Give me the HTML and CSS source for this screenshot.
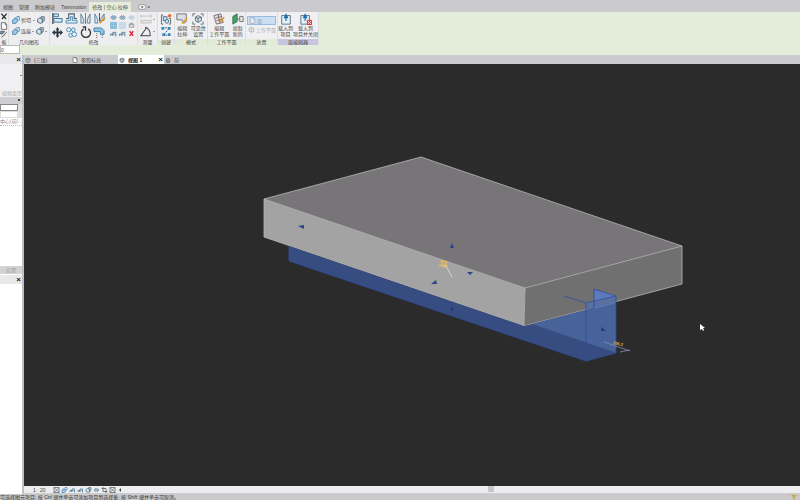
FILE: index.html
```html
<!DOCTYPE html>
<html>
<head>
<meta charset="utf-8">
<title>空心 拉伸</title>
<link rel="stylesheet" href="styles.css">
</head>
<body>
<svg class="defs" aria-hidden="true">
  <symbol id="cube" viewBox="0 0 12 12"><path d="M2 4l4-2 4 2v5l-4 2-4-2zM2 4l4 2 4-2M6 6v5" fill="#e8eef2" stroke="#46535e" stroke-width="1.3"/></symbol>
  <symbol id="solid" viewBox="0 0 12 12"><path d="M1 5l3-2 4 1v6l-3 1-4-2z" fill="#d9e7f1" stroke="#41586b" stroke-width="1.3"/><path d="M6 1h5v6L8 9V4H6z" fill="#a4c3da" stroke="#41586b"/></symbol>
  <symbol id="join" viewBox="0 0 12 12"><path d="M5 3l2-2h4v5L9 8" fill="#e6f0f5" stroke="#3576a8" stroke-width="1.2"/><path d="M1 6l2-2h5v4l-2 3H1z" fill="#9ccbeb" stroke="#3576a8" stroke-width="1.2"/></symbol>
  <symbol id="page" viewBox="0 0 12 12"><path d="M2 1h6l2 3v7H2zM8 1v3h2" fill="#fafafa" stroke="#666" stroke-width="1.3"/></symbol>
  <symbol id="mini" viewBox="0 0 12 12"><path d="M1 6l3-3h1v6H4zM11 6L8 3H7v6h1z" fill="#b9d4e6" stroke="#50768f" stroke-width="1.2"/></symbol>
  <symbol id="grid" viewBox="0 0 12 12"><path d="M1 1h10v10H1z" fill="#b7dff5" stroke="#4492bb"/><path d="M3 3h2v2H3zM7 3h2v2H7zM3 7h2v2H3zM7 7h2v2H7z" fill="#fff" stroke="#4492bb"/></symbol>
  <symbol id="stairs" viewBox="0 0 12 12"><path d="M1 10V7h4V4h5v7M4 10V8h3V6" fill="none" stroke="#4d7897" stroke-width="1.6"/></symbol>
  <symbol id="crop" viewBox="0 0 12 12"><path d="M3 0v9h9M0 3h9v9" fill="none" stroke="#4d5560" stroke-width="1.5"/></symbol>
  <symbol id="detail" viewBox="0 0 12 12"><path d="M1 1h10v10H1zM1 1l10 10M11 1L1 11" fill="#f7f7f7" stroke="#4d5560" stroke-width="1.4"/></symbol>
</svg>
<div class="app">
  <nav class="menu">
    <button>视图</button><button>管理</button><button>附加模块</button><button>Twinmotion</button><button class="current">修改 | 空心 拉伸</button>
    <button class="menu-toggle" aria-label="功能区显示"><svg viewBox="0 0 20 10"><rect x="1" y="1" width="12" height="8" rx="3" fill="#eee" stroke="#777"/><path d="M5 4h4L7 7zM16 4h4l-2 3z" fill="#444"/></svg></button>
  </nav>
  <header class="ribbon">
    <section class="panel clip">
      <div class="body stack">
        <button aria-label="剪切"><svg viewBox="0 0 12 12"><path d="M2 1l7 8M10 1L3 9" stroke="#333" stroke-width="2"/></svg></button>
        <button aria-label="复制"><svg><use href="#page"/></svg></button>
        <button aria-label="匹配"><svg viewBox="0 0 12 12"><path d="M1 2h6l-3 4H1zM10 3L5 9l-3 2" fill="#6c9ab7" stroke="#444"/></svg></button>
      </div><h2>板</h2>
    </section>
    <section class="panel geometry">
      <div class="body rows">
        <div><button><svg><use href="#join"/></svg>剪切</button><i></i><button aria-label="切割"><svg><use href="#solid"/></svg></button></div>
        <div><button><svg><use href="#join"/></svg>连接</button><i></i><button aria-label="拆分面"><svg><use href="#solid"/></svg></button><i></i></div>
      </div><h2>几何图形</h2>
    </section>
    <section class="panel modify">
      <div class="body tools">
        <div class="large-grid">
          <button aria-label="对齐"><svg viewBox="0 0 12 12"><path d="M1 0v12" stroke="#222" stroke-width="1.2"/><path d="M2 1h5v3H2zM2 6h9v4H2z" fill="#d3ebf8" stroke="#386f96"/></svg></button>
          <button aria-label="偏移"><svg viewBox="0 0 12 12"><path d="M0 6h3V1h6v5h3" fill="none" stroke="#415e71" stroke-width="1.2"/><path d="M0 8h5V4h2v4h5v3H0z" fill="#d3ebf8" stroke="#5289ac"/></svg></button>
          <button aria-label="镜像轴"><svg viewBox="0 0 12 12"><path d="M1 11V1l3 6v4zM11 11V1L8 7v4z" fill="#d5e8ef" stroke="#607f8d"/><path d="M6 0v12" stroke="#478e4c"/></svg></button>
          <button aria-label="镜像绘制"><svg viewBox="0 0 12 12"><path d="M1 11V1l3 6v4zM11 8V1L7 7v2z" fill="#d5e8ef" stroke="#4f7f9e"/><path d="M6 0v9" stroke="#444"/><path d="M12 5l-6 6" stroke="#e1922e" stroke-width="2"/></svg></button>
          <button aria-label="移动"><svg viewBox="0 0 12 12"><path d="M6 0l2 3H7v2h2V3l3 3-3 3V7H7v2h1l-2 3-2-3h1V7H3v2L0 6l3-3v2h2V3H4z" fill="#293844"/></svg></button>
          <button aria-label="复制"><svg viewBox="0 0 12 12"><g fill="#e5f4fa" stroke="#4787ad"><circle cx="3" cy="3" r="2.3"/><circle cx="8" cy="3" r="2"/><circle cx="5" cy="9" r="2"/><circle cx="9" cy="8" r="2.5"/></g></svg></button>
          <button aria-label="旋转"><svg viewBox="0 0 12 12"><path d="M4 2a5 5 0 1 0 5 0M3 0h3v4" fill="none" stroke="#333" stroke-width="1.4"/></svg></button>
          <button aria-label="修剪"><svg viewBox="0 0 12 12"><path d="M0 1h8l3 3v4H7V5H0z" fill="#8fc3e0" stroke="#3f7fa6"/><path d="M3 7v5M9 9v3" stroke="#555" stroke-dasharray="1"/></svg></button>
        </div>
        <div class="small-grid">
          <button aria-label="拆分"><svg><use href="#mini"/></svg></button><button aria-label="间隙拆分"><svg><use href="#mini"/></svg></button><button class="muted" aria-label="解锁"><svg><use href="#mini"/></svg></button>
          <button aria-label="阵列"><svg><use href="#grid"/></svg></button><button class="muted" aria-label="缩放"><svg><use href="#grid"/></svg></button><button aria-label="锁定"><svg viewBox="0 0 12 12"><path d="M2 4h8v5H2zM4 4V2h4v2" fill="#ddd" stroke="#777"/></svg></button>
          <button aria-label="单个修剪"><svg><use href="#stairs"/></svg></button><button aria-label="多个修剪"><svg><use href="#stairs"/></svg></button><button aria-label="删除"><svg viewBox="0 0 12 12"><path d="M3 2l6 8M9 2L3 10" stroke="#dc2733" stroke-width="2.5"/></svg></button>
        </div>
      </div><h2>修改</h2>
    </section>
    <section class="panel measure">
      <div class="body rows">
        <div><button class="muted" aria-label="对齐尺寸"><svg viewBox="0 0 14 12"><path d="M1 2h12M1 0v4M13 0v4M1 7h12v3H1z" fill="#ddd" stroke="#777"/></svg></button><i></i></div>
        <div><button aria-label="测量"><svg viewBox="0 0 14 12"><path d="M12 11H1L8 1M6 1c4 1 6 5 6 10" fill="none" stroke="#36444c" stroke-width="1.2"/></svg></button><i></i></div>
      </div><h2>测量</h2>
    </section>
    <section class="panel context create">
      <div class="body rows">
        <button aria-label="创建组"><svg viewBox="0 0 12 12"><path d="M3 1H1v10h2M9 5h2v6H9" fill="none" stroke="#666"/><rect x="3" y="3" width="4" height="4" fill="#d6e6f0" stroke="#3a6e91"/><circle cx="7" cy="8" r="2" fill="#d6e6f0" stroke="#3a6e91"/><circle cx="10" cy="2" r="2" fill="#ed6c32"/></svg></button>
        <button aria-label="创建相似"><svg viewBox="0 0 12 12"><path d="M2 2h8L3 10h8" fill="none" stroke="#31516b" stroke-dasharray="2 1"/><path d="M1 1h3v3H1zM8 1h3v3H8zM2 8h3v3H2zM8 8h3v3H8z" fill="#3288bc"/></svg></button>
      </div><h2>创建</h2>
    </section>
    <section class="panel context mode">
      <div class="body commands">
        <button><svg viewBox="0 0 14 14"><path d="M1 1h11v9l-3 2-2-4H1z" fill="#d9dfe9" stroke="#666"/><path d="M13 6l-6 6" stroke="#e1a738" stroke-width="2"/></svg><span>编辑<br>拉伸</span></button>
        <button><svg viewBox="0 0 14 14"><path d="M4 1H1v3M1 10v3h3M10 1h3v3M13 10v3h-3" fill="none" stroke="#59646e"/><path d="M4 5l3-2 4 2v4l-4 2-3-2zM4 5l3 1 4-1M7 6v5" fill="#cce1ef" stroke="#59646e"/></svg><span>可见性<br>设置</span></button>
      </div><h2>模式</h2>
    </section>
    <section class="panel context plane">
      <div class="body commands">
        <button><svg viewBox="0 0 14 14"><path d="M1 3l8-2 3 10-8 2zM3 6l7-2M4 9l7-2M6 2l2 10" fill="#efe0ca" stroke="#6c5f78"/><path d="M13 5l-5 6" stroke="#d79831" stroke-width="2"/></svg><span>编辑<br>工作平面</span></button>
        <button><svg viewBox="0 0 14 14"><path d="M1 4l5-3v9l-5 3z" fill="#4ba064" stroke="#287245"/><path d="M6 7h3M9 4h4v6H9z" fill="#e5e5e5" stroke="#666"/></svg><span>拾取<br>新的</span></button>
      </div><h2>工作平面</h2>
    </section>
    <section class="panel context placement">
      <div class="body rows">
        <button class="selected"><svg><use href="#page"/></svg>面</button>
        <button class="muted"><svg><use href="#cube"/></svg>工作平面</button>
      </div><h2>放置</h2>
    </section>
    <section class="panel context family">
      <div class="body commands">
        <button><svg viewBox="0 0 14 14"><path d="M2 3h10v10H2z" fill="#e8f1f5" stroke="#476a7f"/><path d="M7 9V4M5 6l2-4 2 4" fill="none" stroke="#176bad" stroke-width="1.5"/></svg><span>载入到<br>项目</span></button>
        <button><svg viewBox="0 0 14 14"><path d="M1 3h10v10H1z" fill="#e8f1f5" stroke="#476a7f"/><path d="M6 9V4M4 6l2-4 2 4" fill="none" stroke="#176bad" stroke-width="1.5"/><path d="M8 8h6v6H8z" fill="#dc3843"/><path d="M9 9l4 4m0-4l-4 4" stroke="#fff"/></svg><span>载入到<br>项目并关闭</span></button>
      </div><h2>族编辑器</h2>
    </section>
  </header>
  <div class="options"><input aria-label="深度" value="0"></div>
  <main class="workspace">
    <aside class="sidebar">
      <div class="side-head"><button aria-label="关闭属性">×</button></div>
      <div class="type"><i></i><button>编辑类型</button></div>
      <div class="side-strip"><b></b></div>
      <div class="property"><input aria-label="拉伸终点"><span></span></div>
      <div class="property second"><input aria-label="拉伸起点"><span></span></div>
      <div class="filter">中心(前/...</div>
      <div class="empty"></div>
      <button class="apply" disabled>应用</button>
      <div class="side-head browser"><button aria-label="关闭浏览器">×</button></div>
      <div class="tree"></div>
    </aside>
    <section class="editor">
      <nav class="tabs">
        <button><svg><use href="#cube"/></svg>{三维}</button>
        <button><svg><use href="#page"/></svg>参照标高</button>
        <button class="active"><svg><use href="#cube"/></svg>视图 1<b>×</b></button>
        <button><svg viewBox="0 0 12 12"><path d="M1 6l5-4 5 4M3 6v5h6V6" fill="#999" stroke="#555"/></svg>前</button>
      </nav>
      <div class="canvas">
        <svg viewBox="24 64 776 422" role="img" aria-label="三维板与空心拉伸">
          <path d="M264 199L421 157 682 246 525 288z" fill="#777578"/>
          <path d="M264 199L525 288 524 326 264 237z" fill="#a3a3a3"/>
          <path d="M525 288L682 246V284L524 326z" fill="#707070"/>
          <path d="M264 199L421 157 682 246V284L524 326 264 237zL525 288 682 246M525 288L524 326" fill="none" stroke="#b8b8b8" stroke-width=".8"/>
          <path d="M289 246L524 326 533 324 616 353 586 361 289 261z" fill="#374d82"/>
          <path d="M532 324L616 302V353z" fill="#486399"/>
          <path d="M594 289L616 296V303L594 309z" fill="#5b7bbd"/>
          <path d="M586 303L616 296V302L586 310z" fill="#5a70a0"/>
          <path d="M289 246V261L586 361 616 353V296L594 289V309M564 296L586 303 616 296M586 303V361" fill="none" stroke="#314c9a" stroke-width=".8"/>
          <g fill="#2d438b"><path d="M298 226l6-1v4zM450 248l2-5 2 5zM467 272l6 0-3 3zM431 284l5-4 1 4z"/><path d="M450 308h4l-2 4zM601 331v-4l5 4z" fill="#243a78"/></g>
          <path d="M446 266L452 277" stroke="#ddd" stroke-width=".8"/>
          <path d="M440 261l7 1-3 3 4 1M439 265l7 2M443 260l-2 7M446 261l-1 7" fill="none" stroke="#edb961" stroke-width="1.2"/>
          <path d="M604 342L630 351M620 352L630 350" stroke="#8190b5" stroke-width=".8"/>
          <text x="613" y="344" class="dimension" transform="rotate(12 613 344)">206.2</text>
          <path d="M700 324V330L702 329 703 331 704 330 703 328H705z" fill="#fff"/>
        </svg>
      </div>
      <footer class="viewbar">
        <div class="viewtools"><span>1 : 20</span>
          <button aria-label="详细程度"><svg><use href="#detail"/></svg></button><button aria-label="视觉样式"><svg><use href="#join"/></svg></button><button aria-label="日光"><svg><use href="#stairs"/></svg></button><button aria-label="阴影"><svg><use href="#stairs"/></svg></button><button aria-label="裁剪"><svg><use href="#solid"/></svg></button><button aria-label="裁剪区域"><svg><use href="#mini"/></svg></button><button aria-label="隐藏"><svg><use href="#crop"/></svg></button><button aria-label="显示"><svg><use href="#detail"/></svg></button><em></em>
        </div><div class="scroll"><span></span></div>
      </footer>
    </section>
  </main>
  <footer class="status"><span>可选择图元项目; 按 Ctrl 键并单击可添加项目到选择集; 按 Shift 键并单击可取消。</span><svg viewBox="0 0 12 8"><path d="M2 1h8L7 5v3H5V5z" fill="#c5ab50"/></svg></footer>
</div>
</body>
</html>
```

FILE: styles.css
```css
* { box-sizing: border-box; }
body { margin: 0; font: 5px/6px "Liberation Sans", "Noto Sans CJK SC", sans-serif; color: #444; background: #cac9ca; }
button, input { font: inherit; color: inherit; border: 0; margin: 0; padding: 0; background: transparent; min-width: 0; }
svg { display: block; overflow: visible; }
.defs { width: 0; height: 0; position: absolute; }
.app { height: 100vh; display: flex; flex-direction: column; overflow: hidden; }
.menu { height: 12px; display: flex; align-items: stretch; flex-shrink: 0; padding-top: 2px; background: #cbcacc; }
.menu button { padding: 0 3px; white-space: nowrap; }
.menu .current { background: #e4edda; min-width: 39px; }
.menu .menu-toggle { margin-left: 4px; }
.menu-toggle svg { width: 12px; height: 6px; }
.ribbon { height: 33px; display: flex; flex-shrink: 0; background: #e4edda; }
.panel { background: #eeeef0; display: flex; flex-direction: column; border-right: 1px solid #dedee0; flex-shrink: 0; }
.body { height: 27px; flex-shrink: 0; }
.panel h2 { margin: 0; font: inherit; text-align: center; white-space: nowrap; }
.context { background: #f0f0f2; }
.context h2 { background: #e1ebd7; }
.clip { width: 9px; }
.stack { display: flex; flex-direction: column; justify-content: space-evenly; align-items: center; }
.stack svg { width: 8px; height: 8px; }
.geometry { width: 41px; }
.rows { display: flex; flex-direction: column; justify-content: space-evenly; padding: 1px 2px; }
.rows > div, .rows button { display: flex; align-items: center; gap: 1px; white-space: nowrap; }
.geometry .rows { padding-left: 3px; }
.geometry .rows > div { gap: 2px; }
.rows svg { width: 8px; height: 8px; flex-shrink: 0; }
.rows i { border: 1px solid transparent; border-top-color: #555; margin-top: 1px; }
.modify { width: 88px; }
.tools { display: flex; gap: 4px; padding: 1px 2px; }
.large-grid { display: grid; grid-template-columns: repeat(4, 12px); column-gap: 2px; row-gap: 2px; }
.large-grid svg { width: 11px; height: 11px; }
.small-grid { display: grid; grid-template-columns: repeat(3, 8px); column-gap: 1px; align-items: center; }
.small-grid svg { width: 7px; height: 7px; }
.muted { opacity: .4; }
.measure { width: 20px; }
.measure .rows svg { width: 12px; height: 11px; }
.create { width: 17px; }
.create .rows svg { width: 12px; height: 11px; }
.commands { display: flex; justify-content: space-around; padding-top: 1px; }
.commands button { display: flex; flex-direction: column; align-items: center; white-space: nowrap; line-height: 6px; }
.commands svg { width: 12px; height: 12px; flex-shrink: 0; }
.mode { width: 33px; }
.plane { width: 38px; }
.placement { width: 32px; }
.placement .rows { justify-content: flex-start; padding: 4px 1px 0; }
.placement button { height: 9px; padding-left: 1px; }
.placement .rows svg { width: 7px; height: 7px; }
.placement .selected { background: #cbdff2; border: 1px solid #9abbdc; color: #8ba2ba; }
.placement .selected svg { opacity: .4; }
.family { width: 41px; }
.family h2 { background: #c9c5df; }
.options { height: 10px; flex-shrink: 0; background: #e4edda; }
.options input { display: block; width: 20px; height: 9px; background: #fff; border: 1px solid #bbb; }
.workspace { flex: 1; min-height: 0; display: flex; }
.sidebar { width: 24px; flex-shrink: 0; background: #fff; border-right: 2px solid #bfc0c2; display: flex; flex-direction: column; }
.side-head { height: 9px; flex-shrink: 0; background: #e9e9eb; display: flex; justify-content: flex-end; padding-right: 1px; }
.side-head button { font-size: 8px; line-height: 7px; font-weight: bold; color: #222; }
.type { height: 33px; background: #f0f0f3; display: flex; flex-direction: column; justify-content: space-between; align-items: end; }
.type i { margin-top: 11px; border: 1px solid transparent; border-top-color: #333; }
.type button { color: #aaa; line-height: 8px; }
.side-strip { height: 7px; background: #cfcfd1; padding: 2px; }
.side-strip b { display: block; width: 2px; height: 2px; background: #444; margin-left: auto; }
.property { display: flex; height: 7px; }
.property input { width: 18px; border: 1px solid #888; background: #fff; }
.property span { flex: 1; background: #ddd; }
.second input { border-color: #ddd; }
.filter { height: 8px; overflow: hidden; white-space: nowrap; border-bottom: 1px dotted #bbb; color: #888; }
.empty { height: 140px; }
.apply { height: 8px; color: #999; background: #d2d2d4; text-align: center; }
.browser { margin-top: 1px; }
.tree { flex: 1; }
.editor { flex: 1; min-width: 0; display: flex; flex-direction: column; }
.tabs { height: 9px; background: #cbcacc; display: grid; grid-template-columns: 47px 47px 46px 40px; flex-shrink: 0; }
.tabs button { display: flex; align-items: center; gap: 3px; padding: 0 1px; white-space: nowrap; }
.tabs svg { width: 6px; height: 6px; }
.tabs .active { background: #fff; color: #222; font-weight: bold; }
.tabs b { margin-left: auto; font-size: 8px; }
.canvas { flex: 1; min-height: 0; background: #2b2b2b; }
.canvas svg { width: 100%; height: 100%; }
.dimension { font: bold 4px "Liberation Sans", sans-serif; fill: #edb541; }
.viewbar { height: 8px; flex-shrink: 0; display: flex; background: #ececee; border-bottom: 1px solid #ccc; }
.viewtools { width: 97px; display: flex; align-items: center; gap: 1px; padding-left: 9px; }
.viewtools span { width: 19px; white-space: nowrap; }
.viewtools svg { width: 7px; height: 6px; }
.viewtools em { border: 2px solid transparent; border-right-color: #444; }
.scroll { flex: 1; background: #eeeef0; display: flex; }
.scroll span { width: 6px; height: 6px; margin-left: 54%; background: #c7c7c9; }
.status { height: 6px; flex-shrink: 0; display: flex; justify-content: space-between; background: #cac9cb; color: #333; white-space: nowrap; }
.status svg { width: 12px; height: 6px; }
```
